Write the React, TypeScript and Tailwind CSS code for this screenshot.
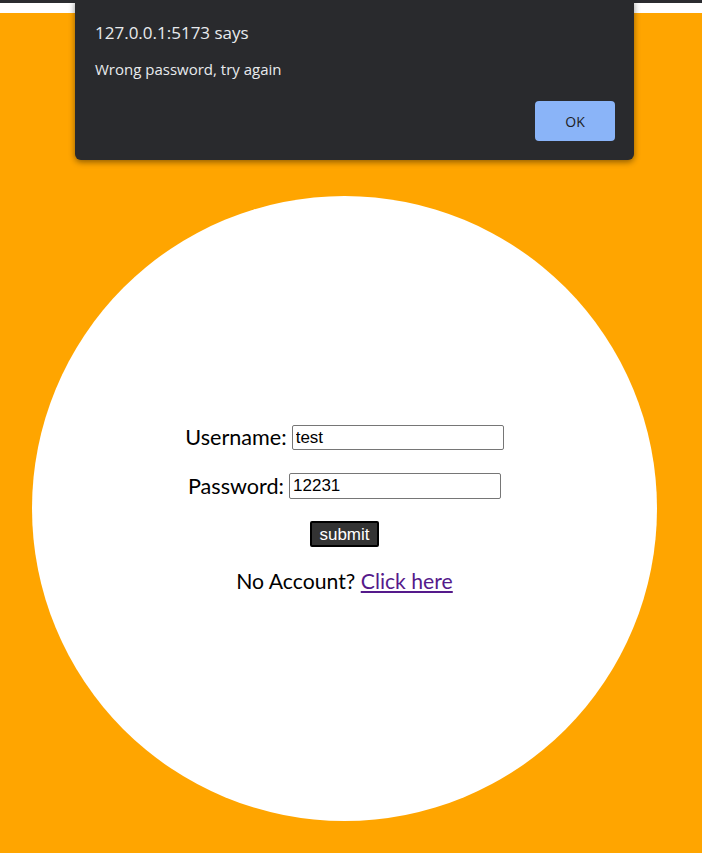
import React from 'react';

const quick = { fontFamily: '"Lato", "Noto Sans", sans-serif' };
const arial = { fontFamily: '"Liberation Sans", Arial, sans-serif' };

export default function App() {
  return (
    <div className="relative min-h-[853px] w-[702px] overflow-hidden bg-[#ffa500]">
      <div className="h-[3px] bg-[#2b2c30]" />
      <div className="h-[10px] bg-white" />

      <div className="ml-[32px] mt-[183px] flex h-[625px] w-[625px] flex-col items-center rounded-full bg-white pt-[229px] text-[21.6px] text-black" style={quick}>
        <div className="flex h-[25px] items-center gap-[5px]">
          <label>Username:</label>
          <input
            defaultValue="test"
            className="h-[25px] w-[212px] rounded-[2px] border border-[#767676] px-[3px] text-[17px] text-black outline-none"
            style={arial}
          />
        </div>
        <div className="mt-[23px] flex h-[26px] items-center gap-[5px]">
          <label>Password:</label>
          <input
            defaultValue="12231"
            className="h-[26px] w-[212px] rounded-[2px] border border-[#767676] px-[3px] text-[17px] text-black outline-none"
            style={arial}
          />
        </div>
        <button
          className="mt-[22px] h-[26px] w-[69px] rounded-[2px] border-2 border-black bg-[#333333] text-[17px] leading-none text-white"
          style={arial}
        >
          submit
        </button>
        <p className="mt-[20px] text-[21.2px] leading-[28px]">
          No Account?{' '}
          <a href="#" className="text-[#551a8b] underline">
            Click here
          </a>
        </p>
      </div>
      <div className="h-[40px]" />

      <div
        className="absolute left-[75px] top-0 h-[160px] w-[559px] rounded-b-[6px] bg-[#292a2d] shadow-[0_2px_6px_rgba(0,0,0,0.45)]"
        style={{ fontFamily: '"Open Sans", "Noto Sans", sans-serif' }}
      >
        <div className="px-[20px] pt-[21px] text-[17px] leading-[24px] text-[#e8eaed]">127.0.0.1:5173 says</div>
        <div className="px-[20px] pt-[13px] text-[15px] leading-[22px] text-[#e8eaed]">Wrong password, try again</div>
        <div className="flex justify-end px-[19px] pt-[21px]">
          <button className="h-[40px] w-[80px] rounded-[4px] bg-[#8ab4f8] text-[14px] text-[#202124]">OK</button>
        </div>
      </div>
    </div>
  );
}
